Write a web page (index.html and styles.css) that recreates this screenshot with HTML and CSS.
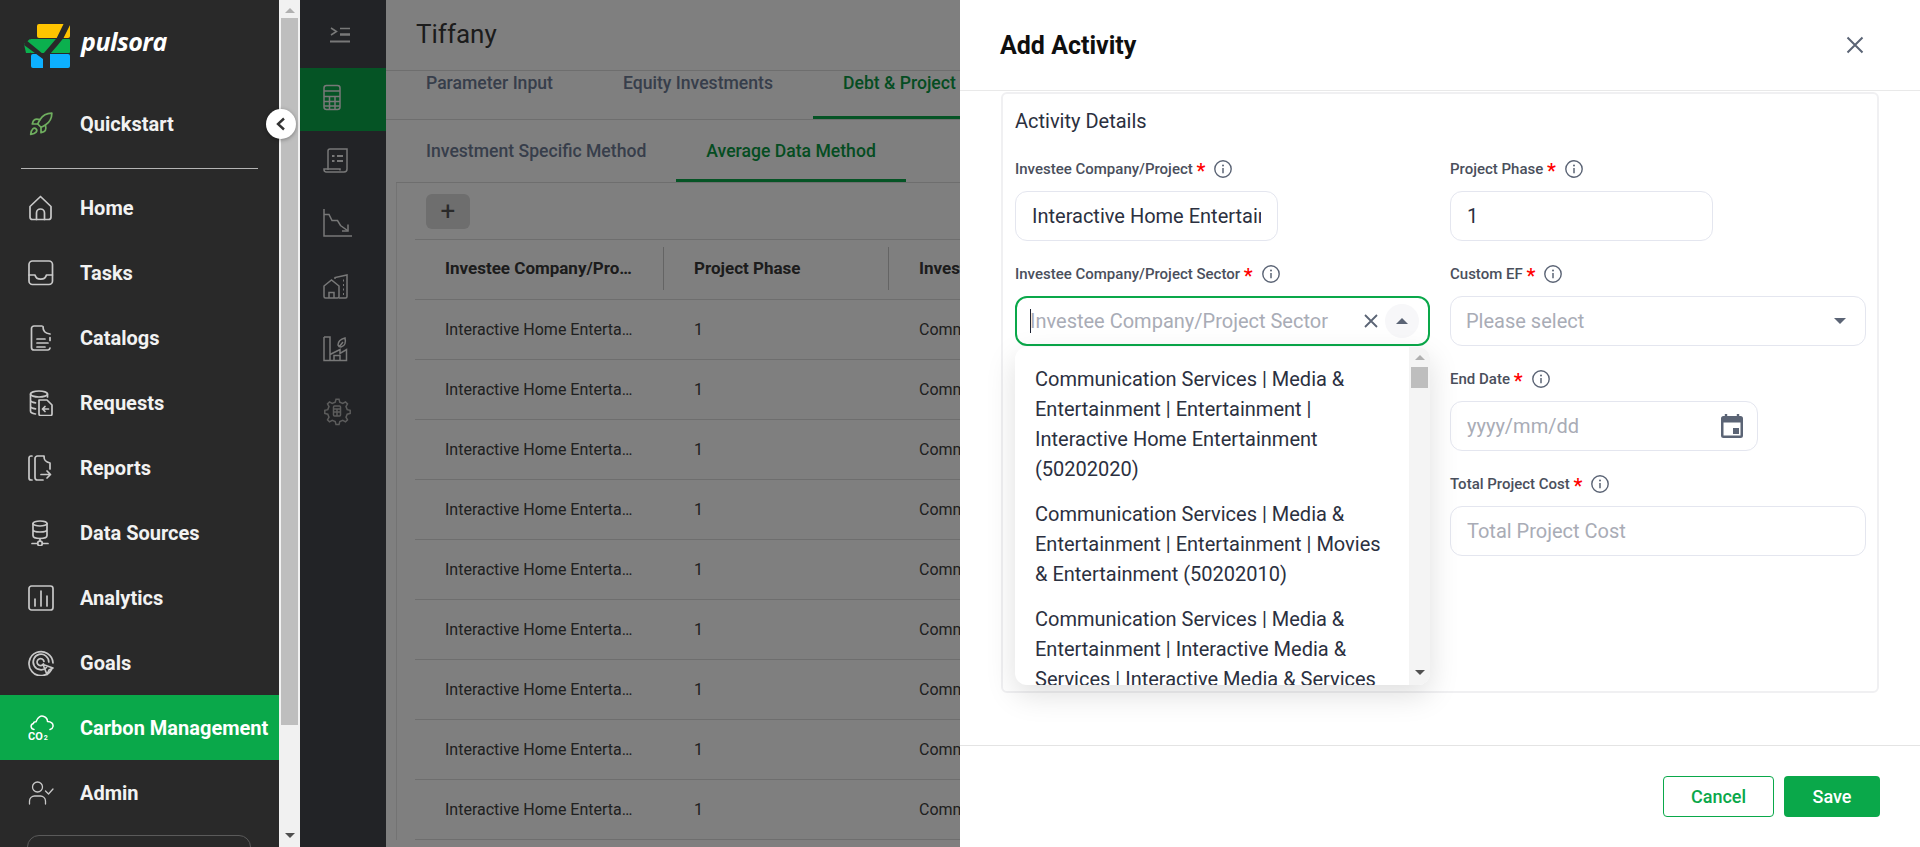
FILE: index.html
```html
<!DOCTYPE html>
<html lang="en">
<head>
  <meta charset="UTF-8" />
  <title>Pulsora - Add Activity</title>
  <link rel="stylesheet" href="styles.css">
</head>
<body>
  <svg class="defs" width="0" height="0">
    <symbol id="info" viewBox="0 0 18 18">
      <circle cx="9" cy="9" r="8.2" fill="none" stroke="currentColor" stroke-width="1.4"/>
      <path d="M9 8v5.2" stroke="currentColor" stroke-width="1.5" fill="none"/>
      <circle cx="9" cy="5.4" r="1" fill="currentColor"/>
    </symbol>
  </svg>

  <div class="app">
    <aside class="sidebar">
      <div class="logo">
        <svg width="46" height="46" viewBox="0 0 46 46">
          <rect x="13" y="1" width="33" height="14" rx="2" fill="#ffc400"/>
          <rect x="6" y="16" width="40" height="14" rx="1" fill="#0bb04e"/>
          <path d="M0 21 6 16v14H2z" fill="#0bb04e"/>
          <rect x="7" y="31" width="39" height="14" rx="2" fill="#0db0ff"/>
          <path d="M47 0 39.500 15 33 23 26 31V46H19V36L0 22 2 17 19 31 26 23 32.700 15 40 0z" fill="#292929"/>
        </svg>
        <span class="wordmark">pulsora</span>
      </div>

      <a class="nav-item quick">
        <span class="nav-icon">
          <svg width="26" height="26" viewBox="0 0 24 24" class="ico rocket"><path d="M4.5 16.5c-1.5 1.26-2 5-2 5s3.74-.5 5-2c.71-.84.7-2.13-.09-2.91a2.18 2.18 0 0 0-2.91-.09z"/><path d="m12 15-3-3a22 22 0 0 1 2-3.95A12.88 12.88 0 0 1 22 2c0 2.72-.78 7.5-6 11a22.35 22.35 0 0 1-4 2z"/><path d="M9 12H4s.55-3.03 2-4c1.62-1.08 5 0 5 0"/><path d="M12 15v5s3.03-.55 4-2c1.08-1.62 0-5 0-5"/></svg>
        </span>
        Quickstart
      </a>
      <div class="nav-divider"></div>

      <a class="nav-item">
        <span class="nav-icon">
          <svg width="26" height="26" viewBox="0 0 26 26" class="ico"><path d="M2 11.5 12.5 1.500 23 11.5V22a2.500 2.500 0 0 1-2.500 2.500H4.500A2.500 2.500 0 0 1 2 22z"/><path d="M8.500 24.500V18a4 4 0 0 1 8 0v6.500"/></svg>
        </span>
        Home
      </a>
      <a class="nav-item">
        <span class="nav-icon">
          <svg width="26" height="26" viewBox="0 0 26 26" class="ico"><rect x="1" y="1" width="23.500" height="23.500" rx="3.500"/><path d="M1 15h6c.6 2.600 2.800 4.200 5.700 4.200s5.100-1.600 5.700-4.200h6"/></svg>
        </span>
        Tasks
      </a>
      <a class="nav-item">
        <span class="nav-icon">
          <svg width="26" height="26" viewBox="0 0 26 26" class="ico"><path d="M14 1H6A2.500 2.500 0 0 0 3.500 3.500v19A2.500 2.500 0 0 0 6 25h14A2.500 2.500 0 0 0 22 23"/><path d="M15 1.500c0 5 2 6.500 7 7.500M22 12.500v3"/><path d="M9 14h8M9 18h11M9 22h8"/></svg>
        </span>
        Catalogs
      </a>
      <a class="nav-item">
        <span class="nav-icon">
          <svg width="26" height="26" viewBox="0 0 26 26" class="ico"><ellipse cx="11" cy="4" rx="8.500" ry="3"/><path d="M2.500 4v17c0 1.500 2 2.600 5 3M19.500 4v3M2.500 10c0 1.400 2 2.400 5 2.800M2.500 16c0 1.400 2 2.400 5 2.800"/><path d="M11 10h8l5 5v9a1.500 1.500 0 0 1-1.500 1.500H12.500A1.500 1.500 0 0 1 11 24z"/><path d="M20.500 19h-6m2.500-2.500L14.500 19l2.500 2.500"/></svg>
        </span>
        Requests
      </a>
      <a class="nav-item">
        <span class="nav-icon">
          <svg width="26" height="26" viewBox="0 0 26 26" class="ico"><path d="M4 1H3A2 2 0 0 0 1 3v20a2 2 0 0 0 2 2h1"/><path d="M16 1H9.500A2.500 2.500 0 0 0 7 3.500v19A2.500 2.500 0 0 0 9.500 25H15"/><path d="M16 1.500c0 4 1.500 5.500 6 6.500v6"/><path d="M13 19.500h9.500M19 16l3.500 3.500L19 23"/></svg>
        </span>
        Reports
      </a>
      <a class="nav-item">
        <span class="nav-icon">
          <svg width="26" height="26" viewBox="0 0 26 26" class="ico"><ellipse cx="12" cy="3.500" rx="7" ry="2.500"/><path d="M5 3.500v12c0 1.700 3 3 7 3s7-1.300 7-3v-12M5 9.500c0 1.400 3 2.500 7 2.500s7-1.100 7-2.500"/><path d="M12 18.500V21M4 23.500h5.500M14.500 23.500H20"/><circle cx="12" cy="23.500" r="2.300"/></svg>
        </span>
        Data Sources
      </a>
      <a class="nav-item">
        <span class="nav-icon">
          <svg width="26" height="26" viewBox="0 0 26 26" class="ico"><rect x="1" y="1" width="24" height="24" rx="2.500"/><path d="M7 14v7M13 6v15M19 11v10"/></svg>
        </span>
        Analytics
      </a>
      <a class="nav-item">
        <span class="nav-icon">
          <svg width="26" height="26" viewBox="0 0 26 26" class="ico"><path d="M23.500 19.500A12 12 0 1 1 25 13"/><path d="M18.500 17.500A7.800 7.800 0 1 1 20.800 12"/><path d="M15.500 14A3.500 3.500 0 1 1 16 11.500"/><path d="M15 14.500 25 18l-4 2-2 4.500z"/></svg>
        </span>
        Goals
      </a>
      <a class="nav-item active">
        <span class="nav-icon">
          <svg width="26" height="26" viewBox="0 0 26 26" class="ico co2"><path d="M6 14.500c-3.500-.5-4-5-.5-6 0-1 1-2 2.500-1.800C9.500 2 13 0 16 1.500c2.500 1 3.500 3 3.500 5 3.500 0 6 2 5.500 5-.2 1.400-1.200 2.500-3 3"/><text x="0" y="25" class="co2-text">CO<tspan class="co2-sub" dx="1">2</tspan></text></svg>
        </span>
        Carbon Management
      </a>
      <a class="nav-item">
        <span class="nav-icon">
          <svg width="26" height="26" viewBox="0 0 26 26" class="ico thin"><circle cx="9.500" cy="7" r="5"/><path d="M1.500 24v-3c0-3 2.500-5 5-5h6c2.500 0 5 2 5 5v3"/><path d="m17.500 11 3 3 4.500-5"/></svg>
        </span>
        Admin
      </a>
      <div class="org-box"></div>

      <button class="collapse-btn">
        <svg width="12" height="14" viewBox="0 0 12 14"><path d="M9 1.500 3 7l6 5.500" fill="none" stroke="#333" stroke-width="2.400"/></svg>
      </button>
    </aside>

    <div class="side-scroll">
      <span class="arrow-up"></span>
      <div class="side-thumb"></div>
      <span class="arrow-down"></span>
    </div>

    <nav class="rail">
      <div class="rail-toggle">
        <svg width="21" height="16" viewBox="0 0 21 16" class="rail-ico"><path d="m1 1 5.500 3.500L1 8"/><path d="M10 1.500h10"/><path d="M10 7.500h10" stroke-width="2.500"/><path d="M0 14.500h20" stroke-width="2"/></svg>
      </div>
      <div class="rail-item current">
        <svg width="30" height="30" viewBox="0 0 30 30" class="rail-ico"><rect x="1" y="2.500" width="16" height="24" rx="2.500"/><path d="M1 8h16M1 13.500h16M1 18.500h16M1 23h16M6.500 13.500V26.500M12 13.500V26.500"/></svg>
      </div>
      <div class="rail-item">
        <svg width="30" height="30" viewBox="0 0 30 30" class="rail-ico"><path d="M5 24V5a2 2 0 0 1 2-2h17v20a3 3 0 0 1-3 3H3a2.500 2.500 0 0 1-2-2.500V23h16v1.500"/><path d="M9 10h2.500M14 10h6M9 15h2.500M14 15h6" stroke-width="2"/></svg>
      </div>
      <div class="rail-item">
        <svg width="30" height="30" viewBox="0 0 30 30" class="rail-ico"><path d="M1 0v27h28"/><path d="M1 5.500h5l3 6h5.500l3 5 7 5"/><path d="M25 15.500v6.500h-6"/></svg>
      </div>
      <div class="rail-item">
        <svg width="30" height="30" viewBox="0 0 30 30" class="rail-ico"><path d="M1 14 8.500 8l7.500 6v10.500a1.500 1.500 0 0 1-1.500 1.500h-12A1.500 1.500 0 0 1 1 24.500z"/><path d="M6 26v-5.500h5V26"/><path d="M12 7V5.500L24 3v21.500a1.500 1.500 0 0 1-1.500 1.500H16"/><path d="M20 8.500h1M20 13h1M20 17.500h1M20 22h1" stroke-width="2"/></svg>
      </div>
      <div class="rail-item">
        <svg width="30" height="30" viewBox="0 0 30 30" class="rail-ico"><path d="M1 2h6v23M1 2v23.500h22.500v-11l-6.500 4v-4l-10 5"/><path d="M11 25.500v-5h6v5"/><path d="M15 10c0-4 3-6 7-7 1 4 0 8-4 9-1 0-2.500-.5-3-2zM16 12l4-5"/></svg>
      </div>
      <div class="rail-item dim">
        <svg width="30" height="30" viewBox="0 0 30 30" class="rail-ico"><path d="M12.500 2h3l.8 3 3 1.200 2.700-1.500 2 2-1.500 2.700 1.200 3 3 .8v3l-3 .8-1.200 3 1.500 2.700-2 2-2.700-1.500-3 1.200-.8 3h-3l-.8-3-3-1.200-2.700 1.500-2-2 1.500-2.700-1.200-3-3-.8v-3l3-.8 1.200-3-1.500-2.700 2-2 2.700 1.500 3-1.200z" transform="translate(.500 .200)"/><rect x="10.500" y="9" width="7" height="10" rx="1"/><path d="M10.500 12h7M10.500 15h7M14 12v7"/></svg>
      </div>
    </nav>

    <main class="main">
      <header class="page-head">Tiffany</header>
      <div class="tabs">
        <span class="tab">Parameter Input</span>
        <span class="tab">Equity Investments</span>
        <span class="tab selected">Debt &amp; Project Finance</span>
      </div>
      <div class="subtabs">
        <span class="tab">Investment Specific Method</span>
        <span class="tab selected">Average Data Method</span>
      </div>
      <div class="table-wrap">
        <div class="toolbar"><button class="add-btn">+</button></div>
        <table class="grid">
          <thead>
            <tr>
              <th class="col-a"><div class="th-in"><span class="cut">Investee Company/Project</span></div></th>
              <th class="col-b"><div class="th-in">Project Phase</div></th>
              <th class="col-c"><div class="th-in">Investee Company/Project Sector</div></th>
            </tr>
          </thead>
          <tbody>
            <tr><td><span class="cut">Interactive Home Entertainment</span></td><td>1</td><td>Communication Services</td></tr>
            <tr><td><span class="cut">Interactive Home Entertainment</span></td><td>1</td><td>Communication Services</td></tr>
            <tr><td><span class="cut">Interactive Home Entertainment</span></td><td>1</td><td>Communication Services</td></tr>
            <tr><td><span class="cut">Interactive Home Entertainment</span></td><td>1</td><td>Communication Services</td></tr>
            <tr><td><span class="cut">Interactive Home Entertainment</span></td><td>1</td><td>Communication Services</td></tr>
            <tr><td><span class="cut">Interactive Home Entertainment</span></td><td>1</td><td>Communication Services</td></tr>
            <tr><td><span class="cut">Interactive Home Entertainment</span></td><td>1</td><td>Communication Services</td></tr>
            <tr><td><span class="cut">Interactive Home Entertainment</span></td><td>1</td><td>Communication Services</td></tr>
            <tr><td><span class="cut">Interactive Home Entertainment</span></td><td>1</td><td>Communication Services</td></tr>
          </tbody>
        </table>
      </div>
    </main>
  </div>

  <div class="overlay"></div>

  <section class="panel">
    <div class="panel-head">
      <h2>Add Activity</h2>
      <svg class="panel-close" width="18" height="18" viewBox="0 0 18 18"><path d="M1.500 1.500l15 15M16.500 1.500l-15 15" stroke="#5b6475" stroke-width="2"/></svg>
    </div>

    <div class="panel-body">
      <div class="card">
        <div class="card-title">Activity Details</div>
        <div class="form">
          <div class="col">
            <div class="field">
              <label class="lbl">Investee Company/Project <i class="req">*</i><svg class="tip" width="18" height="18"><use href="#info"/></svg></label>
              <div class="control narrow"><input type="text" value="Interactive Home Entertainment"></div>
            </div>
            <div class="field">
              <label class="lbl">Investee Company/Project Sector <i class="req">*</i><svg class="tip" width="18" height="18"><use href="#info"/></svg></label>
              <div class="control focus">
                <span class="caret"></span>
                <input type="text" placeholder="Investee Company/Project Sector">
                <svg class="clear-x" width="16" height="16" viewBox="0 0 16 16"><path d="M2 2l12 12M14 2 2 14" stroke="#5b6475" stroke-width="1.800"/></svg>
                <span class="open-circle"><span class="tri-up"></span></span>
              </div>
              <div class="dropdown">
                <div class="options">
                  <div class="opt">Communication Services | Media &amp; Entertainment | Entertainment | Interactive Home Entertainment (50202020)</div>
                  <div class="opt">Communication Services | Media &amp; Entertainment | Entertainment | Movies &amp; Entertainment (50202010)</div>
                  <div class="opt">Communication Services | Media &amp; Entertainment | Interactive Media &amp; Services | Interactive Media &amp; Services (50203010)</div>
                </div>
                <div class="drop-scroll">
                  <span class="arrow-up"></span>
                  <div class="drop-thumb"></div>
                  <span class="arrow-down"></span>
                </div>
              </div>
            </div>
          </div>
          <div class="col">
            <div class="field">
              <label class="lbl">Project Phase <i class="req">*</i><svg class="tip" width="18" height="18"><use href="#info"/></svg></label>
              <div class="control narrow"><input type="text" value="1"></div>
            </div>
            <div class="field">
              <label class="lbl">Custom EF <i class="req">*</i><svg class="tip" width="18" height="18"><use href="#info"/></svg></label>
              <div class="control select">
                <input type="text" placeholder="Please select">
                <span class="tri-down"></span>
              </div>
            </div>
            <div class="field">
              <label class="lbl">End Date <i class="req">*</i><svg class="tip" width="18" height="18"><use href="#info"/></svg></label>
              <div class="control date">
                <input type="text" placeholder="yyyy/mm/dd">
                <svg width="24" height="26" viewBox="0 0 24 26"><path d="M6 1v3M18 1v3" stroke="#5b6475" stroke-width="2.400"/><path d="M3.500 3h17A2.500 2.500 0 0 1 23 5.500v17a2.500 2.500 0 0 1-2.500 2.500h-17A2.500 2.500 0 0 1 1 22.500v-17A2.500 2.500 0 0 1 3.500 3zM3.500 9.500v13h17v-13zM13 15h6v6h-6z" fill="#5b6475" fill-rule="evenodd"/></svg>
              </div>
            </div>
            <div class="field">
              <label class="lbl">Total Project Cost <i class="req">*</i><svg class="tip" width="18" height="18"><use href="#info"/></svg></label>
              <div class="control"><input type="text" placeholder="Total Project Cost"></div>
            </div>
          </div>
        </div>
      </div>
    </div>

    <div class="panel-foot">
      <button class="btn-cancel">Cancel</button>
      <button class="btn-save">Save</button>
    </div>
  </section>
</body>
</html>
```

FILE: styles.css
```css
* {
  margin: 0;
  padding: 0;
  box-sizing: border-box;
  font-family: "Roboto", "Liberation Sans", sans-serif;
}

html, body {
  height: 100%;
  overflow: hidden;
}

.defs {
  display: block;
  height: 0;
}

.app {
  display: flex;
  height: 100vh;
  background: #fff;
}

/* left menu */
.sidebar {
  position: relative;
  width: 279px;
  height: 100vh;
  overflow-y: clip;
  flex-shrink: 0;
  background: #292929;
  color: #fff;
}

.logo {
  display: flex;
  align-items: center;
  height: 91px;
  padding-left: 24px;
  gap: 11px;
}

.wordmark {
  font-family: "Open Sans", sans-serif;
  font-style: italic;
  font-weight: 700;
  font-size: 25px;
  letter-spacing: -0.5px;
  color: #fff;
  margin-top: -10px;
}

.nav-item {
  display: flex;
  align-items: center;
  height: 65px;
  padding-left: 28px;
  font-size: 20px;
  font-weight: 700;
  color: #f2f2f2;
  white-space: nowrap;
}

.nav-item.active {
  background: #0aa84a;
  color: #fff;
}

.nav-icon {
  display: flex;
  width: 26px;
  height: 26px;
  margin-right: 26px;
}

.ico {
  fill: none;
  stroke: #c8c8c8;
  stroke-width: 1.7;
  stroke-linecap: round;
  stroke-linejoin: round;
}

.ico.thin {
  stroke-width: 1.3;
}

.rocket {
  stroke: #6fae5f;
  stroke-width: 1.6;
}

.co2 {
  stroke: #fff;
  stroke-width: 1.5;
}

.co2-text {
  fill: #fff;
  stroke: none;
  font-size: 11px;
  font-weight: 700;
}

.co2-sub {
  font-size: 7px;
}

.nav-divider {
  height: 1px;
  margin: 12px 21px 6px;
  background: #b4b4b4;
}

.org-box {
  height: 60px;
  margin: 10px 28px 0 27px;
  border: 1px solid #5a5a5a;
  border-radius: 12px;
}

.collapse-btn {
  position: absolute;
  top: 109px;
  left: 266px;
  width: 30px;
  height: 30px;
  display: flex;
  align-items: center;
  justify-content: center;
  border: none;
  border-radius: 50%;
  background: #fff;
  box-shadow: 0 1px 4px rgba(0,0,0,0.35);
  z-index: 2;
}

/* fake scrollbars */
.side-scroll {
  width: 21px;
  flex-shrink: 0;
  display: flex;
  flex-direction: column;
  align-items: center;
  background: #f1f1f1;
}

.side-thumb {
  width: 17px;
  height: 707px;
  margin-top: 5px;
  background: #bebebe;
}

.arrow-up {
  width: 0;
  height: 0;
  margin-top: 8px;
  border-left: 5px solid transparent;
  border-right: 5px solid transparent;
  border-bottom: 5px solid #b0b0b0;
}

.arrow-down {
  width: 0;
  height: 0;
  margin-top: auto;
  margin-bottom: 9px;
  border-left: 5px solid transparent;
  border-right: 5px solid transparent;
  border-top: 5px solid #505050;
}

/* icon rail */
.rail {
  width: 86px;
  flex-shrink: 0;
  background: #44464c;
}

.rail-toggle {
  height: 68px;
  padding: 27px 0 0 30px;
}

.rail-item {
  display: flex;
  align-items: center;
  height: 62.8px;
  padding: 0 0 2px 23px;
}

.rail-item.current {
  background: #0aa84a;
}

.rail-ico {
  display: block;
  fill: none;
  stroke: #f0f0f0;
  stroke-width: 1.5;
}

.rail-item.dim .rail-ico {
  stroke: #b8b8b8;
}

/* page behind the panel */
.main {
  flex: 1;
  min-width: 0;
  height: 100vh;
  overflow: hidden;
  background: #fff;
}

.page-head {
  height: 71px;
  padding: 20px 0 0 30px;
  font-size: 26px;
  line-height: 28px;
  color: #383838;
  border-bottom: 1px solid #dcdcdc;
}

.tabs, .subtabs {
  display: flex;
  white-space: nowrap;
}

.tabs {
  height: 49px;
  padding-left: 10px;
  gap: 10px;
  border-bottom: 1px solid #dcdcdc;
}

.subtabs {
  height: 63px;
  margin-left: 10px;
  border-bottom: 1px solid #dcdcdc;
}

.tab {
  padding: 0 30px;
  font-size: 17.6px;
  font-weight: 500;
  line-height: 24px;
  color: #6f7c96;
  flex-shrink: 0;
}

.subtabs .tab {
  padding-top: 19px;
}

.tab.selected {
  color: #0a9a44;
  border-bottom: 3px solid #0aa84a;
}

.table-wrap {
  margin-left: 10px;
  border-left: 1px solid #e6e6e6;
}

.toolbar {
  height: 56px;
  padding: 11px 0 0 29px;
}

.add-btn {
  width: 44px;
  height: 35px;
  border: none;
  border-radius: 6px;
  background: #dcdcdc;
  color: #555;
  font-size: 26px;
  line-height: 35px;
}

.grid {
  margin-left: 18px;
  width: 900px;
  border-collapse: collapse;
  table-layout: fixed;
  white-space: nowrap;
}

.col-a { width: 249px; }
.col-b { width: 225px; }

.grid th {
  height: 60px;
  padding: 0;
  text-align: left;
  font-size: 17px;
  font-weight: 700;
  color: #383838;
  border-top: 1px solid #dcdcdc;
  border-bottom: 1px solid #dcdcdc;
}

.th-in {
  display: flex;
  align-items: center;
  height: 43px;
  padding-left: 30px;
  margin-top: -3px;
  border-right: 1px solid #c8c8c8;
}

.grid td {
  height: 60px;
  padding: 0 0 0 30px;
  font-size: 16px;
  color: #404040;
  border-bottom: 1px solid #dcdcdc;
}

.cut {
  display: block;
  max-width: 190px;
  overflow: hidden;
  text-overflow: ellipsis;
}

.overlay {
  position: fixed;
  top: 0;
  left: 300px;
  right: 0;
  bottom: 0;
  background: rgba(0,0,0,0.5);
}

/* slide-in panel */
.panel {
  position: fixed;
  top: 0;
  right: 0;
  bottom: 0;
  width: 960px;
  display: flex;
  flex-direction: column;
  background: #fff;
}

.panel-head {
  display: flex;
  align-items: center;
  justify-content: space-between;
  flex-shrink: 0;
  height: 91px;
  padding: 0 56px 0 40px;
  border-bottom: 1px solid #e9e9e9;
}

.panel-head h2 {
  font-size: 25px;
  font-weight: 700;
  color: #0f0f0f;
}

.panel-body {
  flex: 1;
  min-height: 0;
  padding: 1px 0 0 41px;
}

.card {
  width: 878px;
  height: 601px;
  padding: 12px 12px 0;
  border: 2px solid #f0f0f2;
  border-radius: 6px;
}

.card-title {
  height: 30px;
  font-size: 20px;
  line-height: 30px;
  color: #2b3040;
}

.form {
  display: grid;
  grid-template-columns: 415px 416px;
  column-gap: 20px;
  margin-top: 18px;
}

.field {
  position: relative;
  margin-bottom: 18px;
}

.lbl {
  display: flex;
  align-items: center;
  height: 30px;
  margin-bottom: 7px;
  font-size: 15px;
  font-weight: 500;
  color: #4a4f5c;
  white-space: pre;
}

.req {
  font-style: normal;
  font-size: 20px;
  line-height: 20px;
  height: 14px;
  margin-top: -2px;
  color: #f00;
}

.tip {
  margin-left: 9px;
  color: #5b6475;
}

.control {
  display: flex;
  align-items: center;
  height: 50px;
  padding: 0 16px;
  background: #fff;
  border: 1px solid #e4e6ef;
  border-radius: 12px;
}

.control.narrow {
  width: 263px;
}

.control.date {
  width: 308px;
  padding-right: 13px;
}

.control.select {
  padding-left: 15px;
}

.control input {
  flex: 1;
  min-width: 0;
  border: none;
  outline: none;
  background: none;
  font-size: 20px;
  color: #2b3040;
}

.control input::placeholder {
  color: #a9acb6;
  opacity: 1;
}

.control.focus {
  padding: 0 9px 0 13px;
  border: 2px solid #0aa84a;
}

.caret {
  width: 1px;
  height: 24px;
  margin-right: -1px;
  background: #1d2233;
}

.clear-x {
  margin-right: 6px;
  flex-shrink: 0;
}

.open-circle {
  display: flex;
  align-items: center;
  justify-content: center;
  width: 34px;
  height: 34px;
  border-radius: 50%;
  background: #f7f7f9;
  flex-shrink: 0;
}

.tri-up {
  width: 0;
  height: 0;
  border-left: 6px solid transparent;
  border-right: 6px solid transparent;
  border-bottom: 6px solid #5b6475;
}

.tri-down {
  width: 0;
  height: 0;
  margin-right: 3px;
  border-left: 6px solid transparent;
  border-right: 6px solid transparent;
  border-top: 6px solid #5b6475;
}

.dropdown {
  position: absolute;
  top: 88px;
  left: 0;
  width: 415px;
  height: 338px;
  display: flex;
  background: #fff;
  border-radius: 12px;
  overflow: hidden;
  box-shadow: 0 10px 30px rgba(0,0,0,0.13);
  z-index: 5;
}

.options {
  flex: 1;
  min-width: 0;
  overflow: hidden;
  padding: 9px 19px 0 20px;
}

.opt {
  padding: 7.5px 0;
  font-size: 20px;
  line-height: 30px;
  color: #2b3040;
}

.drop-scroll {
  width: 21px;
  flex-shrink: 0;
  display: flex;
  flex-direction: column;
  align-items: center;
  background: #f4f4f4;
}

.drop-thumb {
  width: 17px;
  height: 21px;
  margin-top: 7px;
  background: #bebebe;
}

.drop-scroll .arrow-down {
  margin-bottom: 10px;
}

.panel-foot {
  display: flex;
  justify-content: flex-end;
  gap: 10px;
  flex-shrink: 0;
  height: 102px;
  padding: 30px 40px 0 0;
  border-top: 1px solid #e4e4e4;
}

.btn-cancel, .btn-save {
  height: 41px;
  font-size: 18px;
  font-weight: 500;
  border-radius: 4px;
}

.btn-cancel {
  width: 111px;
  background: #fff;
  color: #0aa84a;
  border: 1px solid #0aa84a;
}

.btn-save {
  width: 96px;
  background: #0aa84a;
  color: #fff;
  border: none;
}
```
